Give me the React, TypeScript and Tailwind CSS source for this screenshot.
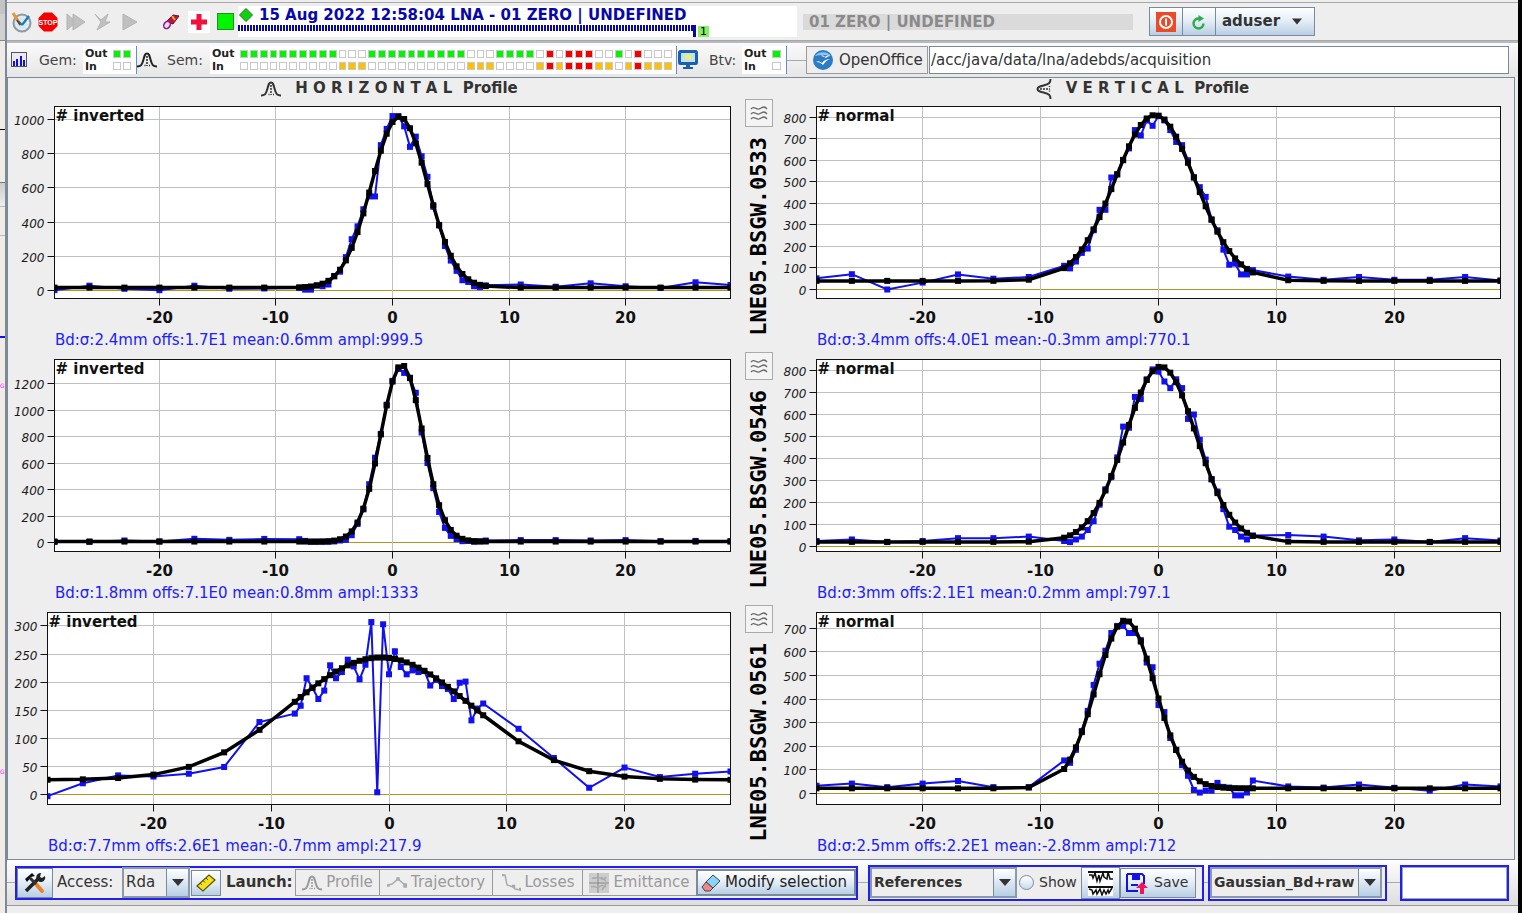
import React from "react";

type Plot = {
  name: string;
  note: string;
  stats: string;
  width: number;
  left: number;
  right: number;
  zeroY: number;
  perUnit: number;
  step: number;
  max: number;
  fit: [sigma: number, offset: number, mean: number, amplitude: number];
  raw: number[];
};

const range = (from: number, to: number, step: number) =>
  Array.from({ length: Math.round((to - from) / step) + 1 }, (_, i) => from + i * step);

// wire positions in mm: fine pitch in the middle, coarse outside
const WIRES = [...range(-29, -11, 3), ...range(-8, 8, 0.5), ...range(11, 29, 3)];

const MONITORS: { id: string; h: Plot; v: Plot }[] = [
  {
    id: "LNE05.BSGW.0533",
    h: {
      name: "LNE05.BSGW.0533 horizontal", note: "# inverted",
      stats: "Bd:σ:2.4mm offs:1.7E1 mean:0.6mm ampl:999.5",
      width: 733, left: 46.5, right: 722.5, zeroY: 191.5, perUnit: 0.171, step: 200, max: 1000,
      fit: [2.4, 17, 0.6, 999.5],
      raw: [
        2, 28, 10, 2, 28, 10, 12,
        15, 5, 5, 30, 25, 35, 85, 110, 195, 300, 375, 475, 550, 550, 850, 945, 1020, 1020, 960, 840, 900, 785, 665, 490, 380, 260, 175, 115, 60, 50, 25, 20, 30,
        35, 22, 42, 25, 15, 48, 32,
      ],
    },
    v: {
      name: "LNE05.BSGW.0533 vertical", note: "# normal",
      stats: "Bd:σ:3.4mm offs:4.0E1 mean:-0.3mm ampl:770.1",
      width: 737, left: 39.5, right: 723.5, zeroY: 190.5, perUnit: 0.2154, step: 100, max: 800,
      fit: [3.4, 40, -0.3, 770.1],
      raw: [
        52, 71, 0, 32, 70, 50, 58,
        110, 98, 130, 170, 190, 275, 370, 370, 520, 535, 600, 655, 740, 715, 785, 760, 805, 785, 740, 685, 670, 600, 520, 475, 430, 325, 275, 185, 115, 120, 70, 70, 90,
        60, 45, 58, 45, 45, 58, 42,
      ],
    },
  },
  {
    id: "LNE05.BSGW.0546",
    h: {
      name: "LNE05.BSGW.0546 horizontal", note: "# inverted",
      stats: "Bd:σ:1.8mm offs:7.1E0 mean:0.8mm ampl:1333",
      width: 733, left: 46.5, right: 722.5, zeroY: 190.5, perUnit: 0.1325, step: 200, max: 1200,
      fit: [1.8, 7.1, 0.8, 1333],
      raw: [
        5, 5, 15, 8, 28, 20, 27,
        25, 12, 5, 5, 5, 5, 8, 15, 20, 55, 140, 250, 440, 640, 820, 1040, 1220, 1310, 1280, 1240, 1130, 830, 600, 410, 230, 110, 50, 25, 10, 12, 5, 8, 15,
        18, 18, 15, 18, 10, 12, 10,
      ],
    },
    v: {
      name: "LNE05.BSGW.0546 vertical", note: "# normal",
      stats: "Bd:σ:3mm offs:2.1E1 mean:0.2mm ampl:797.1",
      width: 737, left: 39.5, right: 723.5, zeroY: 194.5, perUnit: 0.22, step: 100, max: 800,
      fit: [3, 21, 0.2, 797.1],
      raw: [
        25, 32, 20, 25, 38, 38, 45,
        25, 20, 32, 45, 75, 115, 190, 260, 315, 405, 545, 540, 680, 670, 760, 805, 795, 750, 720, 760, 720, 580, 600, 485, 395, 305, 250, 170, 90, 75, 45, 32, 50,
        52, 45, 28, 32, 20, 38, 27,
      ],
    },
  },
  {
    id: "LNE05.BSGW.0561",
    h: {
      name: "LNE05.BSGW.0561 horizontal", note: "# inverted",
      stats: "Bd:σ:7.7mm offs:2.6E1 mean:-0.7mm ampl:217.9",
      width: 733, left: 39.5, right: 722.5, zeroY: 189.5, perUnit: 0.5617, step: 50, max: 300,
      fit: [7.7, 26, -0.7, 217.9],
      raw: [
        -3, 20, 34, 32, 37, 49, 129,
        144, 158, 207, 190, 170, 185, 230, 207, 218, 240, 228, 205, 231, 307, 4, 303, 214, 255, 227, 214, 221, 218, 220, 194, 204, 193, 188, 170, 199, 201, 132, 153, 162,
        117, 65, 12, 48, 31, 37, 41,
      ],
    },
    v: {
      name: "LNE05.BSGW.0561 vertical", note: "# normal",
      stats: "Bd:σ:2.5mm offs:2.2E1 mean:-2.8mm ampl:712",
      width: 737, left: 39.5, right: 723.5, zeroY: 188.5, perUnit: 0.236, step: 100, max: 700,
      fit: [2.5, 22, -2.8, 712],
      raw: [
        33, 42, 27, 42, 53, 27, 27,
        140, 130, 185, 265, 350, 460, 550, 605, 680, 710, 710, 680, 680, 650, 555, 535, 375, 345, 235, 185, 120, 75, 15, 4, 12, 12, 45, 28, 25, -8, -8, 4, 55,
        30, 25, 38, 24, 12, 38, 30,
      ],
    },
  },
];

const SEM_OUT = "gggggggggg...gggggggggg...gggg.r.rrr..g.r...";
const SEM_IN = "..........aaa..........aaa....ararrraa.araaa";

const LED: Record<string, string> = {
  g: "bg-[#00f500]",
  a: "bg-[#ffc000]",
  r: "bg-[#f50000]",
  ".": "bg-white",
};

const steel = "border border-[#7a8a99] bg-linear-to-b from-white via-[#e3ecf5] to-[#b8cfe5]";

function ProfileChart({ plot }: { plot: Plot }) {
  const { left, right, zeroY, perUnit, step, max } = plot;
  const [sigma, offset, mean, amplitude] = plot.fit;
  const top = 7.5;
  const bottom = 199.5;
  const px = (x: number) => left + ((x + 29) * (right - left)) / 58;
  const py = (y: number) => zeroY - y * perUnit;
  const rawPts = WIRES.map((x, i) => [px(x), py(plot.raw[i])]);
  const fitPts = WIRES.map((x) => [
    px(x),
    py(offset + amplitude * Math.exp(-((x - mean) ** 2) / (2 * sigma * sigma))),
  ]);
  const clip = plot.name.replace(/\W/g, "-");

  return (
    <svg viewBox={`0 0 ${plot.width} 229`} className="block w-full h-auto" role="img" aria-label={plot.name}>
      <clipPath id={clip}>
        <rect x={left} y={top} width={right - left} height={bottom - top} />
      </clipPath>
      <rect x={left} y={top} width={right - left} height={bottom - top} fill="#fff" />
      {range(0, max, step).map((v) => {
        const y = Math.floor(py(v)) + 0.5;
        return (
          <g key={v}>
            <line x1={left} x2={right} y1={y} y2={y} stroke={v === 0 ? "#b8921c" : "#c0c0c0"} />
            <line x1={left - 7} x2={left} y1={y} y2={y} stroke="#111" />
            <text x={left - 10} y={y + 5} textAnchor="end" fontSize="12" fontStyle="italic" fill="#1a1a1a">
              {v}
            </text>
          </g>
        );
      })}
      {range(-20, 20, 10).map((v) => {
        const x = Math.floor(px(v)) + 0.5;
        return (
          <g key={v}>
            <line x1={x} x2={x} y1={top} y2={bottom} stroke="#c0c0c0" />
            <line x1={x} x2={x} y1={bottom} y2={bottom + 7} stroke="#111" />
            <text x={x} y="224" textAnchor="middle" fontSize="15" fontWeight="bold" fill="#111">
              {v}
            </text>
          </g>
        );
      })}
      <g clipPath={`url(#${clip})`}>
        <polyline points={rawPts.join(" ")} fill="none" stroke="#1010f0" strokeWidth="2" />
        {rawPts.map(([x, y], i) => (
          <rect key={i} x={x - 3} y={y - 3} width="6" height="6" fill="#1010f0" />
        ))}
        <polyline points={fitPts.join(" ")} fill="none" stroke="#000" strokeWidth="3.5" />
        {fitPts.map(([x, y], i) => (
          <rect key={i} x={x - 3} y={y - 3} width="6" height="6" fill="#000" />
        ))}
      </g>
      <rect x={left} y={top} width={right - left} height={bottom - top} fill="none" stroke="#111" />
      <text x={left + 1} y="22" fontSize="15" fontWeight="bold" fill="#111">
        {plot.note}
      </text>
    </svg>
  );
}

function ProfileCell({ plot }: { plot: Plot }) {
  return (
    <div>
      <ProfileChart plot={plot} />
      <p className={`${plot.left > 40 ? "pl-[47px]" : "pl-10"} h-6 text-[15px] leading-6 text-[#2020ff] whitespace-nowrap`}>
        {plot.stats}
      </p>
    </div>
  );
}

function BellIcon({ className = "" }: { className?: string }) {
  return (
    <svg viewBox="0 0 20 16" className={`w-5 h-4 shrink-0 ${className}`} fill="none" stroke="currentColor">
      <path d="M0 14.5 C4 14.5 5 13 6.5 7.5 C7.500 3.500 8 1.500 10 1.500 C12 1.500 12.500 3.500 13.500 7.500 C15 13 16 14.500 20 14.500" strokeWidth="2" />
      <path d="M10 4v10M7.500 13.500h1M12 13.500h1" strokeWidth="1.500" strokeDasharray="2 1" />
    </svg>
  );
}

function Leds({ out, inn, className = "" }: { out: string; inn: string; className?: string }) {
  return (
    <div className={`flex flex-col gap-1 ${className}`}>
      {[out, inn].map((row, r) => (
        <div key={r} className="flex gap-[2px]">
          {[...row].map((c, i) => (
            <span key={i} className={`h-2 min-w-0 flex-1 border border-[#c8c8c8] ${LED[c]}`} />
          ))}
        </div>
      ))}
    </div>
  );
}

function OutIn() {
  return (
    <div className="w-7 text-[11px] leading-[13px] font-bold text-[#222]">
      <div>Out</div>
      <div>In</div>
    </div>
  );
}

function Arrow({ className = "" }: { className?: string }) {
  return (
    <svg viewBox="0 0 12 7" className={`w-3 h-[7px] ${className}`}>
      <path d="M0 0h12L6 7z" fill="#333" />
    </svg>
  );
}

function Dropdown({ label, options, className }: { label: string; options: string[]; className: string }) {
  return (
    <div className={`relative flex h-[31px] border-2 border-[#8a9aaa] bg-[#eee] ${className}`}>
      <select aria-label={label} className="w-full appearance-none bg-transparent pl-[2px] outline-none">
        {options.map((o) => (
          <option key={o}>{o}</option>
        ))}
      </select>
      <span className="pointer-events-none absolute inset-y-0 right-0 flex w-[22px] items-center justify-center border-l border-[#7a8a99] bg-linear-to-b from-white to-[#b8cfe5]">
        <Arrow />
      </span>
    </div>
  );
}

function StatusBar() {
  return (
    <header className="flex h-[39px] items-center border-y border-[#a8a8a8] bg-[#eee] pl-[4px] pr-1">
      <div className="flex w-[226px] shrink-0 items-center">
        <button aria-label="History" className="mr-[5px]">
          <svg viewBox="0 0 22 22" className="w-[22px] h-[22px]">
            <circle cx="11" cy="12" r="8.500" fill="#d9e8ef" stroke="#8b9aa3" strokeWidth="2" />
            <circle cx="11" cy="12" r="6" fill="none" stroke="#fff" strokeDasharray="1 2" />
            <path d="M11 14l7-9M11 14l-4-4" stroke="#1d78b8" strokeWidth="2.200" fill="none" />
            <path d="M2 2l5 8" stroke="#e2953a" strokeWidth="3" />
            <path d="M6 9l3 5" stroke="#6b3d1d" strokeWidth="1.500" />
          </svg>
        </button>
        <button aria-label="Stop" className="mr-[8px]">
          <svg viewBox="0 0 20 20" className="w-5 h-5">
            <path d="M6 .5h8L19.500 6v8L14 19.500H6L.5 14V6z" fill="#f40000" />
            <text x="10" y="13" textAnchor="middle" fontSize="7" fontWeight="bold" fill="#fff" fontFamily="Liberation Sans, sans-serif">STOP</text>
          </svg>
        </button>
        <button aria-label="Fast forward" className="mr-[8px]">
          <svg viewBox="0 0 20 20" className="w-5 h-5" fill="#c0c0c0" stroke="#b4b4b4">
            <path d="M1 2l9 8-9 8z" />
            <path d="M7 2l12 8-12 8z" />
          </svg>
        </button>
        <button aria-label="Step" className="mr-[9px]">
          <svg viewBox="0 0 18 20" className="w-[18px] h-5" fill="#c0c0c0" stroke="#b4b4b4">
            <path d="M1 2l6 6 7-6-3 8h5L3 18l4-8z" />
          </svg>
        </button>
        <button aria-label="Play" className="mr-[23px]">
          <svg viewBox="0 0 18 20" className="w-[18px] h-5" fill="#c0c0c0" stroke="#b4b4b4">
            <path d="M2 2l14 8-14 8z" />
          </svg>
        </button>
        <button aria-label="Clear" className="mr-[8px]">
          <svg viewBox="0 0 18 18" className="w-[18px] h-[18px]">
            <path d="M4 9l7-7 6 1-6 8z" fill="#c41430" stroke="#6a1030" />
            <path d="M10 3l3 4" stroke="#f2b04a" strokeWidth="2" />
            <ellipse cx="5" cy="12" rx="3" ry="3.800" fill="#f5d6f0" stroke="#8a1a8a" strokeWidth="1.500" transform="rotate(35 5 12)" />
          </svg>
        </button>
        <button aria-label="Add" className="mr-[7px] bg-white">
          <svg viewBox="0 0 22 22" className="w-[22px] h-[22px]">
            <path d="M8.500 3h5v5.500H19v5h-5.500V19h-5v-5.500H3v-5h5.500z" fill="#f2103c" />
          </svg>
        </button>
        <span className="size-[17px] shrink-0 border border-[#2a8a2a] bg-[#00f500]" />
      </div>
      <div className="ml-[1px] w-[559px] h-[31px] shrink-0 bg-white text-[15px] leading-[19px] font-bold text-[#0808a8] whitespace-nowrap">
        <div className="flex h-[19px]">
          <svg viewBox="0 0 14 14" className="mt-[2px] mr-[6px] ml-[1px] w-[14px] h-[14px]">
            <path d="M7 .5L13.500 7 7 13.500.5 7z" fill="#10d010" stroke="#108010" />
          </svg>
          15 Aug 2022 12:58:04 LNA - 01 ZERO | UNDEFINED
        </div>
        <div className="flex">
          <span className="h-[6px] w-[456px] bg-[repeating-linear-gradient(to_right,#0808a8_0_2px,#fff_2px_3px)]" />
          <span className="-ml-[1px] h-[12px] w-[3px] bg-[#0808a8]" />
          <span className="ml-[2px] mt-[1px] h-[11px] w-[11px] bg-[#88ee66] text-center text-[11px] leading-[11px] font-normal text-black">1</span>
        </div>
      </div>
      <div className="ml-[6px] h-4 min-w-0 flex-1 bg-[#dadada] pl-[6px] text-[15px] leading-4 font-bold text-[#8a8a8a] whitespace-nowrap">
        01 ZERO | UNDEFINED
      </div>
      <div className="ml-4 mr-[199px] flex">
        <button aria-label="Power off" className={`flex h-[29px] w-[34px] items-center justify-center ${steel}`}>
          <svg viewBox="0 0 20 20" className="w-5 h-5">
            <rect width="20" height="20" fill="#ea4a28" />
            <circle cx="10" cy="10" r="6" fill="none" stroke="#fff" strokeWidth="2" />
            <path d="M10 6.500v7" stroke="#fff" strokeWidth="2" />
          </svg>
        </button>
        <button aria-label="Refresh" className={`-ml-px flex h-[29px] w-[34px] items-center justify-center ${steel}`}>
          <svg viewBox="0 0 16 16" className="w-4 h-4">
            <path d="M12.500 9.500A5 5 0 1 1 8 4.500" fill="none" stroke="#2cab4a" strokeWidth="2.400" />
            <path d="M7.500 1l5.500 3.500L7.500 8z" fill="#2cab4a" />
          </svg>
        </button>
        <button className={`-ml-px flex h-[29px] w-[100px] items-center justify-between pl-[6px] pr-3 text-[15px] font-bold text-[#333] ${steel}`}>
          aduser
          <Arrow className="w-[10px]!" />
        </button>
      </div>
    </header>
  );
}

function DeviceBar() {
  return (
    <div className="flex h-9 items-center border-t-2 border-[#b4bac0] bg-linear-to-b from-[#fafafa] to-[#e6e6e6] pl-[4px] pr-[9px] text-[15px] text-[#444]">
      <svg viewBox="0 0 16 16" className="w-4 h-4 shrink-0">
        <rect x=".5" y=".5" width="15" height="14" fill="#ece8f4" stroke="#555" />
        <path d="M2 9h2v5H2zM5 7h2v7H5zM9 4h2v10H9zM12 8h2v6h-2z" fill="#1010e0" />
      </svg>
      <span className="ml-[12px] w-11 shrink-0 text-[14px]">Gem:</span>
      <div className="flex h-7 w-[54px] shrink-0 items-center border-r border-[#6a8ad0] bg-white pl-[2px]">
        <OutIn />
        <Leds out="gg" inn=".." className="w-[18px]" />
      </div>
      <BellIcon className="text-[#222]" />
      <span className="ml-[10px] w-[43px] shrink-0 text-[14px]">Sem:</span>
      <div className="flex h-7 w-[467px] shrink-0 items-center border-r border-[#6a8ad0] bg-white pl-[2px]">
        <OutIn />
        <Leds out={SEM_OUT} inn={SEM_IN} className="w-[432px]" />
      </div>
      <svg viewBox="0 0 20 20" className="ml-[1px] w-5 h-5 shrink-0">
        <rect x="1.500" y="1.500" width="17" height="12" rx="1" fill="#bfe3f5" stroke="#1b5fae" strokeWidth="3" />
        <circle cx="10" cy="7" r="3" fill="#f5ee60" />
        <path d="M8 14h4v3h3v2H5v-2h3z" fill="#1b5fae" />
      </svg>
      <span className="ml-[11px] w-[33px] shrink-0 text-[14px]">Btv:</span>
      <div className="flex h-7 w-[45px] shrink-0 items-center border-r border-[#6a8ad0] bg-white pl-[2px]">
        <OutIn />
        <Leds out="g" inn="." className="w-[9px]" />
      </div>
      <span className="h-px w-[19px] shrink-0 bg-[#aaa]" />
      <button className="flex h-7 w-[122px] shrink-0 items-center gap-[6px] border border-[#9a9a9a] bg-[#eee] pl-[6px] text-[15px] text-[#333]">
        <svg viewBox="0 0 20 20" className="w-5 h-5 shrink-0">
          <circle cx="10" cy="10" r="10" fill="#2b7cc4" />
          <path d="M2 6a9 7 0 0 1 16 0A18 10 0 0 0 2 6z" fill="#8cc4ee" />
          <path d="M3 12c3-2 4 0 6 1 2-3 5-4 8-4-3 1-5 3-7 6-2-2-4-3-7-3z" fill="#fff" />
          <path d="M8 6c2-1 3 0 4 1 1-1 3-2 5-1-2 0-3 1-4 2-2-1-3-2-5-2z" fill="#fff" />
        </svg>
        OpenOffice
      </button>
      <input
        aria-label="Acquisition folder"
        defaultValue="/acc/java/data/lna/adebds/acquisition"
        className="ml-[1px] h-7 min-w-0 flex-1 border border-[#7a8a99] bg-white pl-px text-[15px] text-[#333] outline-none"
      />
    </div>
  );
}

function LaunchBar() {
  const off = "flex h-[27px] items-center justify-center gap-[4px] border border-[#999] bg-[#eee] text-[#999] whitespace-nowrap";
  const group = "flex shrink-0 items-center border-2 border-[#2020f0] bg-[#eee]";
  const link = "h-px shrink-0 bg-[#aaa]";
  return (
    <footer className="flex h-[45px] items-center bg-linear-to-b from-[#fdfdfd] to-[#dedede] pr-[9px] text-[15px] text-[#333]">
      <span className={`w-[8px] ${link}`} />
      <div className={`h-[34px] w-[843px] ${group}`}>
        <button aria-label="Tools" className={`flex h-[30px] w-9 shrink-0 items-center justify-center ${steel}`}>
          <svg viewBox="0 0 24 22" className="w-6 h-[22px]" fill="none">
            <path d="M12 11l7 8" stroke="#f08020" strokeWidth="4" strokeLinecap="round" />
            <path d="M3 19L16 6" stroke="#222" strokeWidth="3.500" />
            <path d="M22 4a4.500 4.500 0 1 1-4-3l-1 4 2 1z" fill="#222" />
            <path d="M7 6l6 6" stroke="#333" strokeWidth="3" />
            <path d="M2 7l7-6 3 3-4 1-4 5z" fill="#111" />
          </svg>
        </button>
        <label className="flex shrink-0 items-center">
          <span className="w-[69px] pl-[4px]">Access:</span>
          <Dropdown label="Access" options={["Rda"]} className="w-[68px]" />
        </label>
        <button aria-label="Calibration" className={`ml-[1px] flex h-[26px] w-[30px] shrink-0 items-center justify-center ${steel}`}>
          <svg viewBox="0 0 20 18" className="w-5 h-[18px]">
            <path d="M1 12L13 1l6 5L7 17z" fill="#f5e020" stroke="#5a5400" strokeWidth="1.200" />
            <path d="M4 9l2 2M7 6.500l2 2M10 4l2 2" stroke="#5a5400" />
          </svg>
        </button>
        <span className="w-[74px] shrink-0 pl-[5px] font-bold">Launch:</span>
        <button disabled className={`w-[85px] shrink-0 ${off}`}><BellIcon />Profile</button>
        <button disabled className={`-ml-px w-[114px] shrink-0 ${off}`}>
          <svg viewBox="0 0 20 12" className="w-5 h-3 shrink-0" fill="none" stroke="#aaa" strokeWidth="1.500">
            <path d="M1 8l4-1 6-5 7 6" />
            <path d="M17 7h3v3h-3zM10 1h2v2h-2zM0 8h2v1H0z" fill="#aaa" />
          </svg>
          Trajectory
        </button>
        <button disabled className={`-ml-px w-[91px] shrink-0 ${off}`}>
          <svg viewBox="0 0 20 18" className="w-5 h-[18px] shrink-0" fill="none" stroke="#aaa" strokeWidth="1.500">
            <path d="M1 1h3l2 10 6 2 2 2 6 1" />
            <path d="M1 1h2M11 12h2v2M18 15h2v2" strokeWidth="2.500" />
          </svg>
          Losses
        </button>
        <button disabled className={`-ml-px w-[115px] shrink-0 ${off}`}>
          <svg viewBox="0 0 20 20" className="w-5 h-5 shrink-0" fill="none">
            <rect width="20" height="20" fill="#ccc" />
            <path d="M0 10h20M9 0v20" stroke="#888" />
            <path d="M3 5c4 1 5-2 8 0s4 2 6-1M2 14c4-2 6 2 8 0s4-2 7 0M12 4l5 4M13 17l4-6" stroke="#aaa" strokeWidth="1.500" />
          </svg>
          Emittance
        </button>
        <button className={`-ml-px flex h-[27px] min-w-0 flex-1 items-center gap-[4px] border-2! pl-[3px] text-[#222] whitespace-nowrap ${steel}`}>
          <svg viewBox="0 0 20 18" className="w-5 h-[18px] shrink-0">
            <path d="M5 8L12 1l7 6-7 7z" fill="#86d4f6" stroke="#444" />
            <path d="M5 8l7 6-3 3H4l-3-4z" fill="#f08888" stroke="#444" />
          </svg>
          Modify selection
        </button>
      </div>
      <span className={`w-[10px] ${link}`} />
      <div className={`h-[36px] w-[336px] ${group}`}>
        <Dropdown label="References" options={["References"]} className="w-[147px] text-[14px] font-bold" />
        <label className="ml-[2px] flex items-center gap-[5px] text-[14px]">
          <input type="radio" name="show" className="size-[15px] appearance-none rounded-full border border-[#7a8a99] bg-linear-to-b from-white to-[#c8dcee]" />
          <span className="w-[42px]">Show</span>
        </label>
        <button aria-label="Compare" className={`flex h-[32px] w-[39px] items-center justify-center ${steel}`}>
          <svg viewBox="0 0 25 27" className="w-[25px] h-[27px]" fill="none" stroke="#111" strokeWidth="1.500">
            <rect width="25" height="27" fill="#fff" stroke="none" />
            <path d="M0 3h25M0 18h25" strokeWidth="2" />
            <path d="M1 6h3l1 3 2-5 2 8 2-6 1 6 3-8 1 4 3 2 1-7 2 7h3" />
            <path d="M1 20l3 1 1 4 3-4 1 4 3-5 2 6 2-5 2 4 2-4 1 3 3-5" />
          </svg>
        </button>
        <button className={`flex h-[30px] w-[76px] items-center gap-[6px] pl-[5px] text-[14px] ${steel}`}>
          <svg viewBox="0 0 22 22" className="w-[22px] h-[22px] shrink-0" fill="none">
            <path d="M1 2h15l2 2v8M1 2v17h11" stroke="#1414e0" strokeWidth="2" />
            <path d="M6 2h8v6H6zM5 12h7v2H5z" fill="#1414e0" />
            <path d="M16 10l6 6h-4v6h-4v-6h-4z" fill="#f0145a" />
          </svg>
          Save
        </button>
      </div>
      <span className={`w-[4px] ${link}`} />
      <div className={`h-[36px] w-[179px] ${group}`}>
        <Dropdown label="Display" options={["Gaussian_Bd+raw"]} className="w-[172px] text-[14px] font-bold" />
      </div>
      <span className={`w-[13px] ${link}`} />
      <div className="flex h-[36px] min-w-0 flex-1 border-2 border-[#2020f0]">
        <input aria-label="Message" className="w-full border border-[#9aa8b4] bg-white" />
      </div>
    </footer>
  );
}

// Sliver of the window that sits behind this one
function BackWindow() {
  return (
    <div aria-hidden="true" className="flex w-[7px] shrink-0 flex-col border-r-2 border-[#7a8a99] bg-[#f0ebe6]">
      <div className="h-[14px] bg-[#c4c4c4]" />
      <div className="h-[27px] border-b border-[#888] bg-[#d0d0d0]" />
      <div className="h-[89px] border-b border-black" />
      <div className="h-[53px] border-b border-[#777]" />
      <div className="h-[24px] border-b border-[#bbb] bg-linear-to-b from-[#ccc] to-[#eee]" />
      <div className="h-[29px] border-b border-[#bbb]" />
      <div className="h-[102px] border-b-2 border-[#1010f0]" />
      <div className="flex h-[94px] items-center text-[6px] text-[#ff20ff]">G</div>
      <div className="h-[292px]" />
      <div className="flex h-[94px] items-center text-[6px] text-[#ff20ff]">G</div>
    </div>
  );
}

export default function App() {
  return (
    <div className="flex min-h-screen bg-[#eee] font-['DejaVu_Sans',sans-serif]">
      <BackWindow />
      <div className="min-w-0 flex-1 pt-[2px]">
        <StatusBar />
        <DeviceBar />
        <main className="mr-[3px] border border-[#7a8a99] pb-[1px]">
          <div className="grid grid-cols-[733fr_36px_737fr]">
            <h2 className="flex h-[21px] items-center justify-center gap-[14px] pl-[30px] text-[15px] font-bold text-[#333] whitespace-pre">
              <BellIcon />
              H O R I Z O N T A L  Profile
            </h2>
            <span />
            <h2 className="flex h-[21px] items-center justify-center gap-[12px] pr-[8px] text-[15px] font-bold text-[#333] whitespace-pre">
              <BellIcon className="-rotate-90" />
              V E R T I C A L  Profile
            </h2>
            {MONITORS.map((m) => (
              <React.Fragment key={m.id}>
                <ProfileCell plot={m.h} />
                <div className="flex flex-col items-center gap-[10px]">
                  <button aria-label={`Filter ${m.id}`} className="flex size-7 items-center justify-center border border-[#aaa] bg-[#f4f4f4]">
                    <svg viewBox="0 0 18 16" className="w-[18px] h-4" fill="none" stroke="#666" strokeWidth="1.300">
                      <path d="M1 4c3-4 5 1 8 0s5-4 8 0M1 9c3-4 5 1 8 0s5-4 8 0M1 14c3-4 5 1 8 0s5-4 8 0" />
                    </svg>
                  </button>
                  <div className="rotate-180 font-['DejaVu_Sans_Mono',monospace] text-[22px] leading-7 font-bold text-black [writing-mode:vertical-rl] whitespace-nowrap">
                    {m.id}
                  </div>
                </div>
                <ProfileCell plot={m.v} />
              </React.Fragment>
            ))}
          </div>
        </main>
        <LaunchBar />
        <div className="border-t border-[#999]" />
      </div>
      <div className="w-1 shrink-0 bg-black" />
    </div>
  );
}
